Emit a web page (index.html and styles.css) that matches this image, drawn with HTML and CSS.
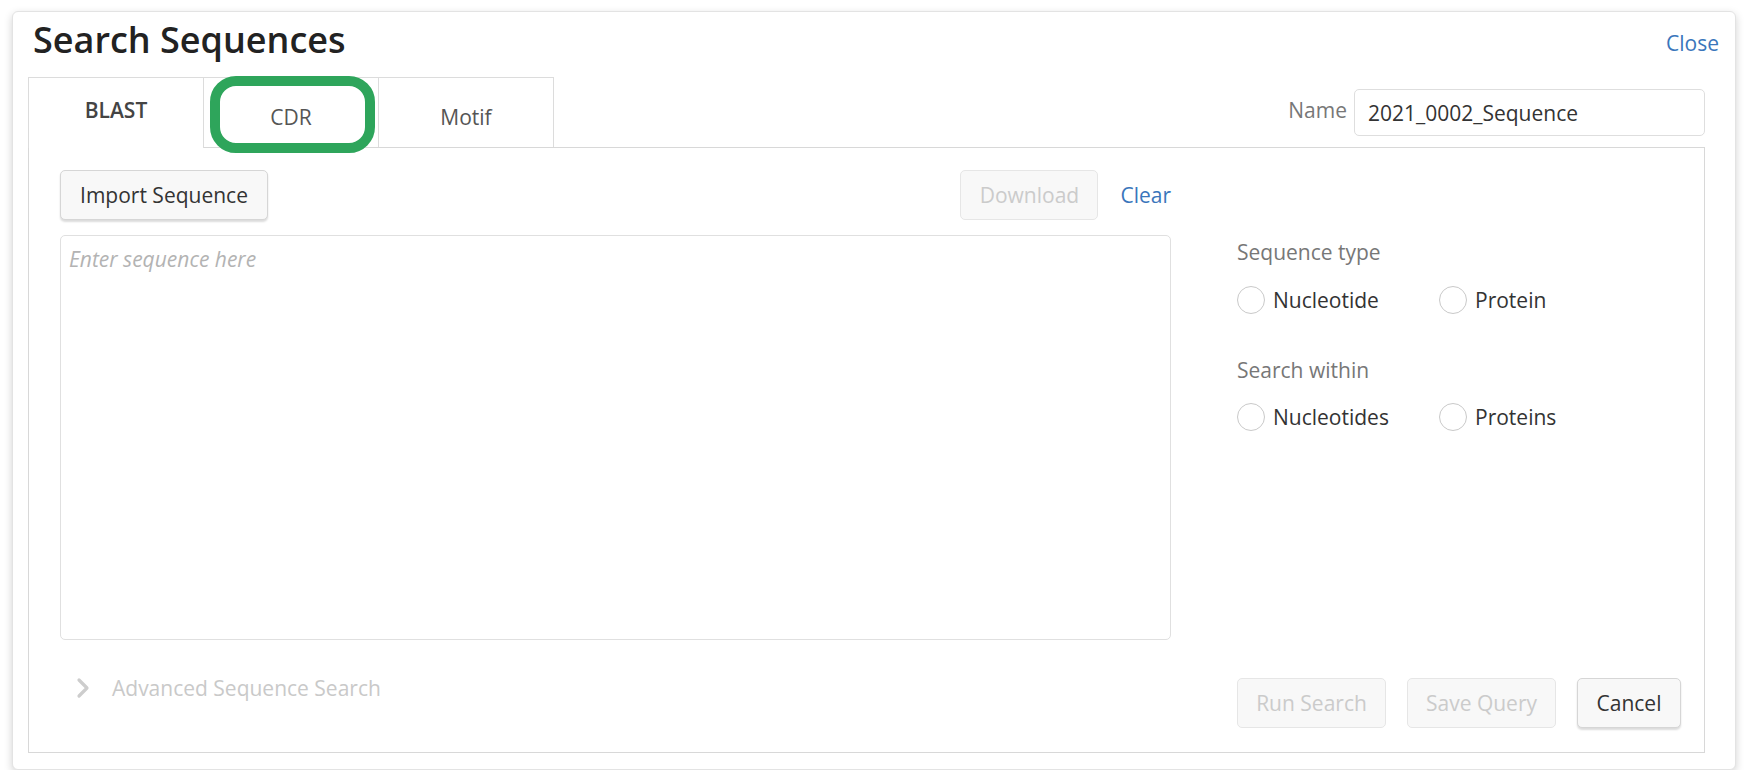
FILE: index.html
```html
<!DOCTYPE html>
<html lang="en">
<head>
    <meta charset="utf-8">
    <title>Search Sequences</title>
    <link rel="stylesheet" href="styles.css">
</head>
<body>

<div class="modal">
    <div class="modal-head">
        <h1>Search Sequences</h1>
        <a class="link close" href="#">Close</a>
    </div>

    <div class="tab-bar">
        <div class="tabs">
            <div class="tab active">BLAST</div>
            <div class="tab">CDR<span class="highlight"></span></div>
            <div class="tab">Motif</div>
        </div>
        <div class="name-field">
            <label for="query-name">Name</label>
            <input type="text" id="query-name" value="2021_0002_Sequence">
        </div>
    </div>

    <div class="panel">
        <div class="seq-col">
            <div class="toolbar">
                <button class="btn import">Import Sequence</button>
                <div class="toolbar-right">
                    <button class="btn download" disabled>Download</button>
                    <a class="link" href="#">Clear</a>
                </div>
            </div>
            <textarea class="seq-input" placeholder="Enter sequence here"></textarea>
            <div class="advanced">
                <svg class="chevron" width="14" height="22" viewBox="0 0 14 22">
                    <polyline points="3,3 11,11 3,19" fill="none" stroke="#cdcdcd" stroke-width="3.2" stroke-linecap="round" stroke-linejoin="round"/>
                </svg>
                <span>Advanced Sequence Search</span>
            </div>
        </div>

        <div class="opt-col">
            <div class="group">
                <div class="group-label">Sequence type</div>
                <div class="radios">
                    <label class="radio"><span class="dot"></span>Nucleotide</label>
                    <label class="radio"><span class="dot"></span>Protein</label>
                </div>
            </div>
            <div class="group">
                <div class="group-label">Search within</div>
                <div class="radios">
                    <label class="radio"><span class="dot"></span>Nucleotides</label>
                    <label class="radio"><span class="dot"></span>Proteins</label>
                </div>
            </div>
            <div class="actions">
                <button class="btn wide" disabled>Run Search</button>
                <button class="btn wide" disabled>Save Query</button>
                <button class="btn cancel">Cancel</button>
            </div>
        </div>
    </div>
</div>

</body>
</html>
```

FILE: styles.css
```css
* {
    padding: 0;
    margin: 0;
    box-sizing: border-box;
    font-family: 'Open Sans', 'Noto Sans', sans-serif;
}

body {
    background-color: #fff;
    color: #333;
    font-size: 21px;
}

.modal {
    margin: 11px 12px 0 12px;
    width: 1724px;
    padding: 0 30px 16px 15px;
    background-color: #fff;
    border: 1px solid #e3e3e3;
    border-radius: 6px;
    box-shadow: 0px 3px 8px 0px rgba(0, 0, 0, 0.18);
}

.modal-head {
    display: flex;
    justify-content: space-between;
    align-items: center;
    height: 65px;
    padding: 0 0 10px 5px;
    margin-right: -14px;
}

.modal-head h1 {
    font-size: 36px;
    font-weight: 600;
    color: #222;
    line-height: 42px;
}

.link {
    color: #3a76bb;
    text-decoration: none;
    font-size: 21px;
}

.close {
    margin-top: 6px;
}

.tab-bar {
    display: flex;
    justify-content: space-between;
    align-items: flex-end;
    height: 70px;
}

.tabs {
    display: flex;
    margin-bottom: -1px;
}

.tab {
    position: relative;
    width: 176px;
    height: 70px;
    margin-right: -1px;
    padding-top: 25px;
    border: 1px solid #dcdcdc;
    border-bottom: none;
    background-color: #fff;
    text-align: center;
    line-height: 28px;
    color: #555;
}

.tab.active {
    z-index: 1;
    padding-top: 18px;
    height: 71px;
    font-weight: 600;
    color: #444;
}

.highlight {
    position: absolute;
    left: 6px;
    top: -2px;
    width: 165px;
    height: 77px;
    border: 10px solid #2ea55b;
    border-radius: 26px;
}

.name-field {
    display: flex;
    align-items: center;
    margin-bottom: 11px;
}

.name-field label {
    color: #777;
    margin-right: 7px;
    margin-top: -5px;
}

.name-field input {
    width: 351px;
    height: 47px;
    padding: 0 13px;
    border: 1px solid #dedede;
    border-radius: 5px;
    font-size: 21px;
    color: #333;
}

.panel {
    display: flex;
    height: 606px;
    padding: 22px 23px 24px 31px;
    border: 1px solid #d8d8d8;
}

.seq-col {
    width: 1113px;
    margin-right: 66px;
}

.toolbar {
    display: flex;
    justify-content: space-between;
    align-items: center;
    height: 50px;
}

.toolbar-right {
    display: flex;
    align-items: center;
}

.toolbar-right .link {
    margin-left: 22px;
}

.btn {
    height: 50px;
    padding: 0 16px;
    border: 1px solid #d6d6d6;
    border-radius: 5px;
    background-color: #f8f8f8;
    box-shadow: 0px 2px 2px 0px rgba(0, 0, 0, 0.14);
    font-size: 21px;
    color: #333;
}

.btn:disabled {
    border-color: #e6e6e6;
    box-shadow: none;
    color: #cbcbcb;
}

.import {
    width: 208px;
}

.download {
    width: 138px;
}

.seq-input {
    display: block;
    width: 100%;
    height: 405px;
    margin-top: 15px;
    padding: 9px 8px;
    border: 1px solid #e0e0e0;
    border-radius: 5px;
    resize: none;
    font-size: 21px;
    line-height: 28px;
    color: #333;
}

.seq-input::placeholder {
    font-style: italic;
    color: #b3b3b3;
}

.advanced {
    display: flex;
    align-items: center;
    margin-top: 34px;
    padding-left: 16px;
    line-height: 28px;
    color: #c9c9c9;
}

.chevron {
    margin-right: 22px;
}

.opt-col {
    flex: 1;
    display: flex;
    flex-direction: column;
    padding-top: 68px;
}

.group-label {
    color: #777;
    line-height: 28px;
}

.radios {
    display: flex;
    margin-top: 19px;
}

.group + .group {
    margin-top: 41px;
}

.group + .group .radios {
    margin-top: 18px;
}

.radio {
    display: flex;
    align-items: center;
    width: 202px;
    height: 30px;
    color: #333;
}

.dot {
    width: 28px;
    height: 28px;
    margin-right: 8px;
    border: 1px solid #c9c9c9;
    border-radius: 50%;
    background-color: #fff;
}

.actions {
    display: flex;
    justify-content: flex-end;
    gap: 21px;
    margin-top: auto;
}

.wide {
    width: 149px;
}

.cancel {
    width: 104px;
}
```
